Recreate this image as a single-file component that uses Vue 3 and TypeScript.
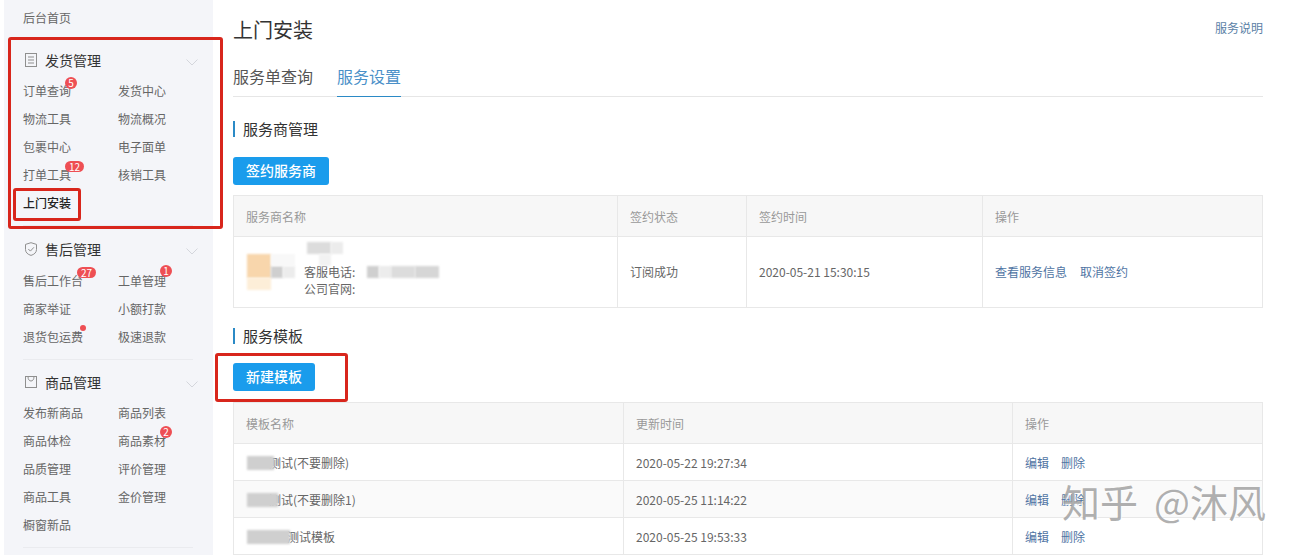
<script setup lang="ts">
interface Item { label: string; badge?: string; dot?: boolean; top?: number; left?: number; active?: boolean }
interface Group { title: string; icon: string; items: Item[] }

const groups: Group[] = [
  { title: '发货管理', icon: 'doc', items: [
    { label: '订单查询', badge: '5', top: 0 }, { label: '发货中心' },
    { label: '物流工具' }, { label: '物流概况' },
    { label: '包裹中心' }, { label: '电子面单' },
    { label: '打单工具', badge: '12', top: 0 }, { label: '核销工具' },
    { label: '上门安装', active: true },
  ] },
  { title: '售后管理', icon: 'shield', items: [
    { label: '售后工作台', badge: '27', top: 0, left: 54 }, { label: '工单管理', badge: '1', top: -2 },
    { label: '商家举证' }, { label: '小额打款' },
    { label: '退货包运费', dot: true }, { label: '极速退款' },
  ] },
  { title: '商品管理', icon: 'bag', items: [
    { label: '发布新商品' }, { label: '商品列表' },
    { label: '商品体检' }, { label: '商品素材', badge: '2', top: -1 },
    { label: '品质管理' }, { label: '评价管理' },
    { label: '商品工具' }, { label: '金价管理' },
    { label: '橱窗新品' },
  ] },
]

const mosaic = [
  { x: 13, y: 17, w: 24, h: 24, c: '#f8d6ac' },
  { x: 13, y: 41, w: 24, h: 12, c: '#fdeed8' },
  { x: 37, y: 29, w: 12, h: 12, c: '#cfcfcf' },
  { x: 49, y: 29, w: 12, h: 12, c: '#ececec' },
  { x: 37, y: 17, w: 24, h: 12, c: '#f8f8f8' },
  { x: 73, y: 5, w: 24, h: 12, c: '#dcdcdc' },
  { x: 97, y: 5, w: 12, h: 12, c: '#ececec' },
  { x: 85, y: 17, w: 12, h: 12, c: '#f2f2f2' },
  { x: 133, y: 29, w: 12, h: 12, c: '#cfcfcf' },
  { x: 145, y: 29, w: 12, h: 12, c: '#ececec' },
  { x: 157, y: 29, w: 24, h: 12, c: '#dcdcdc' },
  { x: 181, y: 29, w: 24, h: 12, c: '#d6d6d6' },
]

const templates = [
  { name: '测试(不要删除)', time: '2020-05-22 19:27:34', pad: 23, mask: 27, alt: false },
  { name: '测试(不要删除1)', time: '2020-05-25 11:14:22', pad: 23, mask: 31, alt: true },
  { name: '测试模板', time: '2020-05-25 19:53:33', pad: 41, mask: 43, alt: false },
]
</script>

<template>
  <div class="page">
    <aside class="side">
      <div class="home">后台首页</div>
      <section v-for="(g, gi) in groups" :key="g.title" class="group" :class="'group-' + gi">
        <h3 class="group-title">
          <svg class="gicon" width="12" height="14" viewBox="0 0 12 14" fill="none" stroke="#8f8f8f" stroke-width="1">
            <template v-if="g.icon === 'doc'">
              <rect x="0.500" y="0.500" width="11" height="13" />
              <path d="M3 4h6M3 7h6M3 10h6" />
            </template>
            <template v-else-if="g.icon === 'shield'">
              <path d="M6 .7 11.500 2.400V7.500c0 3-2.300 5-5.500 5.900-3.200-.9-5.500-2.900-5.500-5.900V2.400Z" />
              <path d="M3.300 7 5.400 9.100 8.900 5.300" />
            </template>
            <template v-else>
              <rect x="0.500" y="1.500" width="11" height="11" />
              <path d="M3 1.500c0 3 1.300 4.500 3 4.500s3-1.500 3-4.500" />
            </template>
          </svg>
          <span class="gname">{{ g.title }}</span>
          <svg class="chev" width="12" height="7" viewBox="0 0 12 7" fill="none" stroke="#d4d6dc" stroke-width="1">
            <path d="M.5.500 6 6l5.500-5.500" />
          </svg>
        </h3>
        <ul class="items">
          <li v-for="it in g.items" :key="it.label" class="item" :class="{ active: it.active }">
            {{ it.label }}
            <i
              v-if="it.badge"
              class="badge"
              :class="{ wide: it.badge.length > 1 }"
              :style="{ top: (it.top ?? 0) + 'px', left: (it.left ?? 42) + 'px' }"
            >{{ it.badge }}</i>
            <i v-if="it.dot" class="dot"></i>
          </li>
        </ul>
      </section>
    </aside>

    <main class="main">
      <header class="head">
        <h1 class="title">上门安装</h1>
        <a class="help">服务说明</a>
      </header>
      <nav class="tabs">
        <span class="tab">服务单查询</span>
        <span class="tab on">服务设置</span>
      </nav>

      <h2 class="sec first">服务商管理</h2>
      <button class="btn wide-btn">签约服务商</button>

      <div class="table t1">
        <div class="tr th">
          <div class="td">服务商名称</div>
          <div class="td">签约状态</div>
          <div class="td">签约时间</div>
          <div class="td">操作</div>
        </div>
        <div class="tr provider">
          <div class="td pcell">
            <span
              v-for="(m, i) in mosaic"
              :key="i"
              class="mos"
              :style="{ left: m.x + 'px', top: m.y + 'px', width: m.w + 'px', height: m.h + 'px', background: m.c }"
            ></span>
            <div class="pinfo">
              <div>客服电话:</div>
              <div>公司官网:</div>
            </div>
          </div>
          <div class="td">订阅成功</div>
          <div class="td">2020-05-21 15:30:15</div>
          <div class="td links"><a>查看服务信息</a><a>取消签约</a></div>
        </div>
      </div>

      <h2 class="sec second">服务模板</h2>
      <button class="btn">新建模板</button>

      <div class="table t2">
        <div class="tr th">
          <div class="td">模板名称</div>
          <div class="td">更新时间</div>
          <div class="td">操作</div>
        </div>
        <div v-for="t in templates" :key="t.time" class="tr trow" :class="{ alt: t.alt }">
          <div class="td tname">
            <span class="mask" :style="{ width: t.mask + 'px' }"></span>
            <span :style="{ paddingLeft: t.pad + 'px' }">{{ t.name }}</span>
          </div>
          <div class="td">{{ t.time }}</div>
          <div class="td links small"><a>编辑</a><a>删除</a></div>
        </div>
      </div>
    </main>

    <div class="mark outer"></div>
    <div class="mark inner"></div>
    <div class="mark third"></div>
    <div class="watermark">知乎<span class="wm-gap"></span>@沐风</div>
  </div>
</template>

<style>
html, body { margin: 0; background: #fff; }
</style>

<style scoped>
.page {
  position: relative;
  display: flex;
  width: 1296px;
  height: 555px;
  overflow: hidden;
  background: #fff;
  font-family: "Noto Sans CJK SC", "Liberation Sans", sans-serif;
  font-size: 12px;
  color: #666;
}
.side {
  flex: none;
  width: 209px;
  height: 555px;
  margin-left: 4px;
  background: #f4f5f9;
  overflow: hidden;
}
.home { height: 36px; line-height: 36px; padding-left: 19px; color: #666; }
.group { margin: 8px 20px 0 19px; padding-bottom: 8px; border-bottom: 1px solid #eaebef; }
.group-0 { margin-top: 9px; }
.group-1 .group-title { height: 33px; }
.group-2 { margin-top: 7px; }
.group-title {
  display: flex;
  align-items: center;
  box-sizing: border-box;
  height: 32px;
  margin: 0;
  padding-bottom: 2px;
  font-size: 14px;
  font-weight: 400;
  color: #333;
}
.group-1 .group-title { padding-bottom: 3px; }
.gicon { margin-left: 2px; flex: none; }
.gname { margin-left: 8px; }
.chev { margin-left: auto; margin-right: -5px; margin-top: 4px; }
.items {
  display: grid;
  grid-template-columns: 95px 1fr;
  grid-auto-rows: 28px;
  margin: 0;
  padding: 0;
  list-style: none;
}
.item { position: relative; line-height: 28px; white-space: nowrap; }
.item.active { color: #222; font-weight: 500; }
.badge {
  position: absolute;
  width: 12px;
  height: 12px;
  border-radius: 6px;
  background: #ee4f54;
  color: #fff;
  font-size: 10px;
  font-style: normal;
  line-height: 12px;
  text-align: center;
}
.badge.wide { width: 19px; height: 11px; line-height: 11px; }
.dot {
  position: absolute;
  left: 57px;
  top: 2px;
  width: 6px;
  height: 6px;
  border-radius: 50%;
  background: #ee4f54;
}

.main { flex: none; width: 1030px; margin-left: 20px; }
.head { display: flex; align-items: center; justify-content: space-between; height: 58px; }
.title { margin: 0; font-size: 20px; font-weight: 400; color: #333; }
.help { margin-top: -4px; color: #5b7fa6; }
.tabs { display: flex; gap: 24px; height: 38px; border-bottom: 1px solid #e6e6e6; }
.tab { height: 38px; line-height: 36px; font-size: 16px; color: #555; }
.tab.on { color: #4a90c8; border-bottom: 1px solid #2b8ac6; }
.sec {
  margin: 0;
  height: 16px;
  line-height: 16px;
  padding-left: 8px;
  border-left: 2px solid #2b8ac6;
  font-size: 15px;
  font-weight: 400;
  color: #333;
}
.sec.first { margin-top: 24px; }
.sec.second { margin-top: 20px; }
.btn {
  display: block;
  width: 82px;
  height: 28px;
  margin: 19px 0 0;
  padding: 0 0 2px;
  border: 0;
  border-radius: 3px;
  background: #1a9cec;
  color: #fff;
  font-family: inherit;
  font-size: 14px;
  font-weight: 500;
  line-height: 26px;
}
.wide-btn { width: 96px; }
.sec.first + .btn { margin-top: 20px; }

.table { border: 1px solid #e8e8e8; border-bottom: 0; }
.t1 { margin-top: 10px; }
.t2 { margin-top: 11px; }
.tr { display: grid; border-bottom: 1px solid #e8e8e8; }
.t1 .tr { grid-template-columns: 383px 129px 236px 1fr; }
.t2 .tr { grid-template-columns: 389px 389px 1fr; }
.th { height: 40px; background: #f7f7f7; color: #999; }
.provider { height: 70px; }
.trow { height: 36px; }
.trow.alt { background: #fafafa; }
.td {
  display: flex;
  align-items: center;
  padding-left: 12px;
  border-left: 1px solid #e8e8e8;
  white-space: nowrap;
}
.provider .td { padding-bottom: 2px; box-sizing: border-box; }
.td:first-child { border-left: 0; }
.pcell { position: relative; padding-left: 70px; }
.mos { position: absolute; filter: blur(1px); }
.pinfo { margin-top: 17px; line-height: 17px; }
.tname { position: relative; }
.mask {
  position: absolute;
  left: 13px;
  top: 12px;
  height: 14px;
  background: #cfcfcf;
  filter: blur(1px);
}
.links a { color: #4f74a3; margin-right: 13px; }
.links.small a { margin-right: 12px; }

.mark { position: absolute; border: 3px solid #d8261c; border-radius: 3px; box-sizing: border-box; pointer-events: none; }
.outer { left: 8px; top: 37px; width: 215px; height: 192px; }
.inner { left: 13px; top: 188px; width: 68px; height: 33px; }
.third { left: 215px; top: 353px; width: 133px; height: 49px; }
.watermark {
  position: absolute;
  left: 1062px;
  top: 474px;
  font-size: 38px;
  line-height: 54px;
  white-space: nowrap;
  color: rgba(150, 150, 150, .75);
  text-shadow: 1px 1px 0 rgba(255, 255, 255, .8);
}
.wm-gap { display: inline-block; width: 16px; }
</style>
